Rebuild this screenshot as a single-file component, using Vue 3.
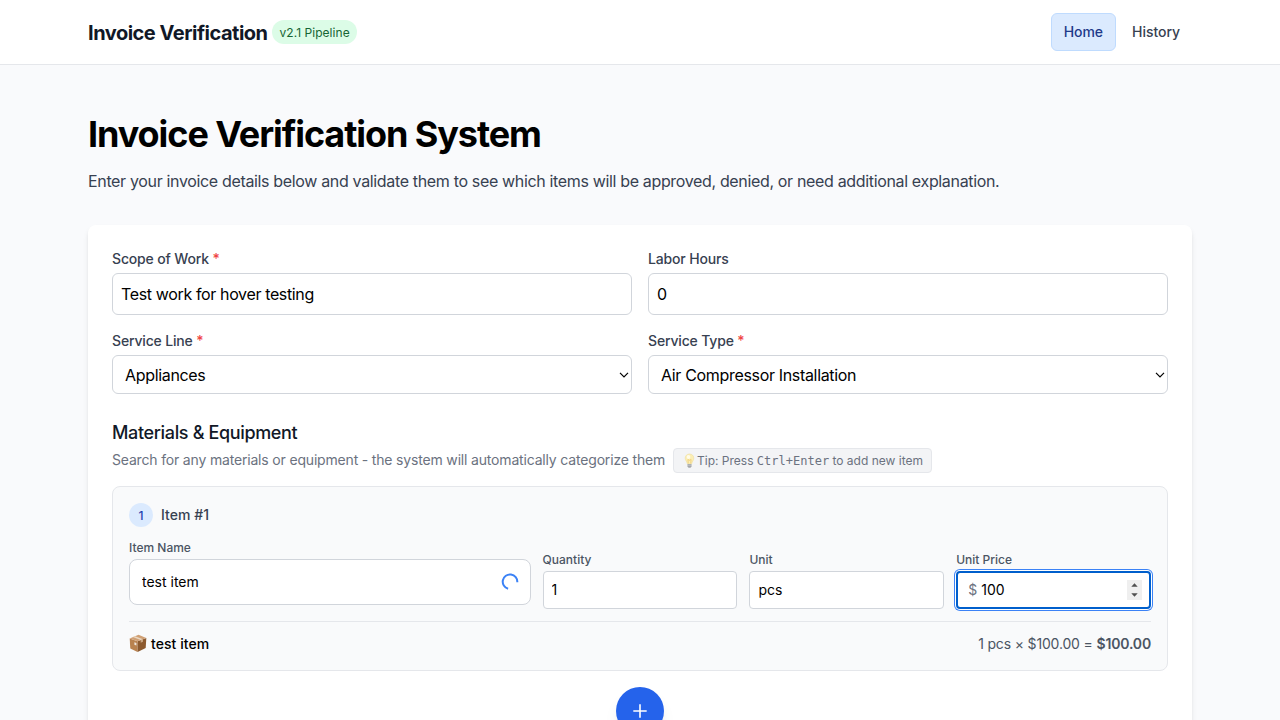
<script setup>
import { reactive, computed } from 'vue'

const form = reactive({
  scope: 'Test work for hover testing',
  hours: '0',
  line: 'Appliances',
  type: 'Air Compressor Installation',
})
const item = reactive({ name: 'test item', qty: '1', unit: 'pcs', price: '100' })
const rate = computed(() => '$' + Number(item.price).toFixed(2))
const total = computed(() => '$' + (item.qty * item.price).toFixed(2))
</script>

<template>
  <div class="page">
    <header class="topbar">
      <div class="container bar">
        <div class="brand">
          <span class="brand-name">Invoice Verification</span>
          <span class="badge">v2.1 Pipeline</span>
        </div>
        <nav class="nav">
          <a class="link active">Home</a>
          <a class="link">History</a>
        </nav>
      </div>
    </header>

    <main class="container main">
      <h1>Invoice Verification System</h1>
      <p class="lead">Enter your invoice details below and validate them to see which items will be approved, denied, or need additional explanation.</p>

      <section class="card">
        <div class="fields">
          <div class="field">
            <label>Scope of Work <span class="req">*</span></label>
            <input v-model="form.scope" class="input" />
          </div>
          <div class="field">
            <label>Labor Hours</label>
            <input v-model="form.hours" class="input" />
          </div>
          <div class="field">
            <label>Service Line <span class="req">*</span></label>
            <div class="select">
              <span>{{ form.line }}</span>
              <svg width="10" height="6" viewBox="0 0 10 6"><path d="M1 .8l4 4 4-4" fill="none" stroke="#000" stroke-width="1.2" /></svg>
            </div>
          </div>
          <div class="field">
            <label>Service Type <span class="req">*</span></label>
            <div class="select">
              <span>{{ form.type }}</span>
              <svg width="10" height="6" viewBox="0 0 10 6"><path d="M1 .8l4 4 4-4" fill="none" stroke="#000" stroke-width="1.2" /></svg>
            </div>
          </div>
        </div>

        <h2>Materials &amp; Equipment</h2>
        <div class="hint">
          <span class="hint-text">Search for any materials or equipment - the system will automatically categorize them</span>
          <span class="tip">
            <svg class="bulb" width="15" height="16" viewBox="0 0 15 16">
              <path d="M7.5 1C4.9 1 3.2 2.8 3.2 5.2c0 2.2 1.7 3.1 2.1 5.6h4.4c.4-2.5 2.1-3.400 2.100-5.600C11.800 2.800 10.100 1 7.500 1z" fill="#fbeeb4" stroke="#eedd9e" stroke-width=".6" />
              <path d="M6.300 10.500L5.900 6.500l1.600.8 1.600-.8-.4 4" fill="none" stroke="#edc66b" stroke-width=".7" />
              <ellipse cx="6.500" cy="4" rx="1.800" ry="1.900" fill="#fffbe8" />
              <path d="M5.500 11h4v2.600l-1 1.200h-2l-1-1.200z" fill="#a5a7aa" />
              <path d="M5.500 12.200h4" stroke="#d5d6d8" stroke-width=".6" />
            </svg>
            <span>Tip: Press <kbd>Ctrl+Enter</kbd> to add new item</span>
          </span>
        </div>

        <div class="item">
          <div class="item-head">
            <span class="num">1</span>
            <span>Item #1</span>
          </div>
          <div class="item-grid">
            <div class="cell wide">
              <label>Item Name</label>
              <div class="name-box">
                <input v-model="item.name" class="bare" />
                <svg class="spin" width="18" height="18" viewBox="0 0 18 18"><path d="M16.300 9.300A7.300 7.300 0 1 0 7.100 15.800" fill="none" stroke="#3b82f6" stroke-width="2" /></svg>
              </div>
            </div>
            <div class="cell">
              <label>Quantity</label>
              <input v-model="item.qty" class="small" />
            </div>
            <div class="cell">
              <label>Unit</label>
              <input v-model="item.unit" class="small" />
            </div>
            <div class="cell">
              <label>Unit Price</label>
              <div class="price">
                <span class="dollar">$</span>
                <input v-model="item.price" class="bare" />
                <svg class="stepper" width="15" height="20" viewBox="0 0 15 20">
                  <rect width="15" height="20" fill="#efefef" />
                  <path d="M4.300 6.800h6.400L7.500 3.300zM4.300 13.200h6.400l-3.200 3.500z" fill="#505050" />
                </svg>
              </div>
            </div>
          </div>
          <div class="summary">
            <div class="sum-name">
              <svg width="18" height="19" viewBox="0 0 18 19">
                <path d="M.7 4.400L8.600 7.200V18L1.300 14.600z" fill="#b9824f" />
                <path d="M17.300 4L8.600 7.200V18l8.100-4z" fill="#8c5a2f" />
                <path d="M.7 4.400L9.500.8l7.800 3.200-8.700 3.200z" fill="#d0a074" />
                <path d="M3.800 3.100l2.200-.9L14 5.200l-2.300.9z" fill="#ead8c3" />
                <path d="M11.700 6.100L14 5.200v2.600l-2.300 1z" fill="#c9a683" />
                <path d="M5.400 8.200l2 .8v2.500l-2-.8z" fill="#eee5dc" />
              </svg>
              <span>{{ item.name }}</span>
            </div>
            <div class="sum-total">{{ item.qty }} {{ item.unit }} × {{ rate }} = <b>{{ total }}</b></div>
          </div>
        </div>

        <button class="add">
          <svg width="24" height="24" viewBox="0 0 24 24"><path d="M12 5.300v13.400M5.300 12h13.400" stroke="#fff" stroke-width="1.600" /></svg>
        </button>
      </section>
    </main>
  </div>
</template>

<style>
body { background: #f9fafb; }
</style>

<style scoped>
* { box-sizing: border-box; }
.page {
  height: 720px;
  overflow: hidden;
  background: #f9fafc;
  color: #000;
  font-family: Inter, "Liberation Sans", sans-serif;
}
.container { width: 1104px; margin: 0 auto; }
.topbar { height: 65px; background: #fff; border-bottom: 1px solid #e5e7eb; }
.bar { height: 64px; display: flex; align-items: center; justify-content: space-between; }
.brand { display: flex; align-items: center; }
.brand-name { width: 184px; font-size: 20px; line-height: 28px; font-weight: 700; letter-spacing: -0.49px; color: #111827; white-space: nowrap; margin-top: 2px; }
.badge { height: 24px; padding: 0 7.500px; border-radius: 12px; background: #dcfce7; color: #166534; font-size: 12px; line-height: 26px; letter-spacing: 0.05px; }
.nav { display: flex; gap: 3px; }
.link { height: 38px; padding: 0 12px; border: 1px solid transparent; border-radius: 6px; font-size: 14px; line-height: 36px; font-weight: 500; letter-spacing: -0.04px; color: #374151; }
.nav .link:last-child { padding-right: 11px; }
.active { background: #dbeafe; border-color: #bfdbfe; color: #1e3a8a; }

.main { padding-top: 47px; }
h1 { margin: 0; font-size: 36px; line-height: 44px; font-weight: 700; letter-spacing: -1.080px; }
.lead { margin: 13px 0 0; font-size: 16px; line-height: 24px; letter-spacing: -0.342px; color: #374151; white-space: nowrap; }

.card { margin-top: 32px; padding: 24px; height: 600px; background: #fff; border-radius: 8px; box-shadow: 0 4px 6px -1px rgba(0, 0, 0, 0.1), 0 2px 4px -2px rgba(0, 0, 0, 0.1); }
.fields { display: grid; grid-template-columns: 1fr 1fr; gap: 16px; }
label { display: block; font-weight: 500; color: #374151; }
.field label { font-size: 14px; line-height: 20px; letter-spacing: -0.16px; margin-bottom: 4px; }
.req { color: #ef4444; }
input { display: block; width: 100%; margin: 0; font-family: inherit; color: #000; outline: none; }
.input { height: 42px; padding: 0 8px; border: 1px solid #d1d5db; border-radius: 6px; background: #fff; font-size: 16px; letter-spacing: -0.36px; }
.select { display: flex; align-items: center; justify-content: space-between; height: 39px; padding: 0 2.500px 0 12px; border: 1px solid #d1d5db; border-radius: 6px; background: #fff; font-size: 16px; line-height: 24px; letter-spacing: -0.33px; }

h2 { margin: 27px 0 0; font-size: 18px; line-height: 24px; font-weight: 500; letter-spacing: -0.35px; color: #111827; }
.hint { display: flex; align-items: center; gap: 8px; height: 25px; margin-top: 3px; white-space: nowrap; }
.hint-text { width: 553px; margin-top: -2px; font-size: 14px; letter-spacing: -0.175px; color: #6b7280; }
.tip { display: flex; align-items: center; height: 25px; padding: 0 8px; border: 1px solid #e5e7eb; border-radius: 4px; background: #f3f4f6; color: #6b7280; font-size: 12px; }
kbd { font: 12px "DejaVu Sans Mono", monospace; }

.item { margin-top: 13px; height: 185px; padding: 16px; border: 1px solid #e5e7eb; border-radius: 8px; background: #f9fafb; }
.item-head { display: flex; align-items: center; gap: 8px; font-size: 14px; line-height: 24px; font-weight: 500; letter-spacing: 0.06px; color: #374151; }
.num { width: 24px; height: 24px; border-radius: 50%; background: #dbeafe; color: #1e40af; font-size: 12px; line-height: 25px; text-align: center; }
.item-grid { display: grid; grid-template-columns: repeat(5, 1fr); gap: 12px; margin-top: 12px; height: 70px; }
.wide { grid-column: span 2; }
.cell:not(.wide) { padding-top: 12px; }
.cell label { font-size: 12px; line-height: 16px; padding-top: 1px; margin-bottom: 3px; color: #4b5563; }
.name-box { display: flex; align-items: center; height: 46px; padding: 0 10.500px 0 12px; border: 1px solid #d1d5db; border-radius: 8px; background: #fff; }
.bare { flex: 1; min-width: 0; padding: 0 0 2px; border: 0; background: transparent; font-size: 14px; height: 20px; }
.small { height: 38px; padding: 0 8px 2px; border: 1px solid #d1d5db; border-radius: 4px; background: #fff; font-size: 14px; }
.price { display: flex; align-items: center; height: 38px; padding: 0 7px 0 10px; border: 2px solid #005fcc; border-radius: 4px; background: #fff; box-shadow: 0 0 0 1px #fff, 0 0 0 2px #3b82f6; }
.dollar { width: 13px; padding-bottom: 1px; font-size: 14px; color: #6b7280; }
.summary { display: flex; justify-content: space-between; align-items: center; margin-top: 12px; padding-top: 12px; border-top: 1px solid #e5e7eb; font-size: 14px; line-height: 20px; }
.sum-name { display: flex; align-items: center; gap: 4px; font-weight: 500; height: 20px; letter-spacing: 0.06px; }
.sum-name svg { margin-top: -2px; }
.sum-total { color: #4b5563; letter-spacing: -0.16px; }
.sum-total b { font-weight: 600; }

.add { display: flex; align-items: center; justify-content: center; width: 48px; height: 48px; margin: 16px auto 0; padding: 0; border: 0; border-radius: 50%; background: #2563eb; box-shadow: 0 10px 15px -3px rgba(0, 0, 0, 0.1), 0 4px 6px -4px rgba(0, 0, 0, 0.1); }
</style>
